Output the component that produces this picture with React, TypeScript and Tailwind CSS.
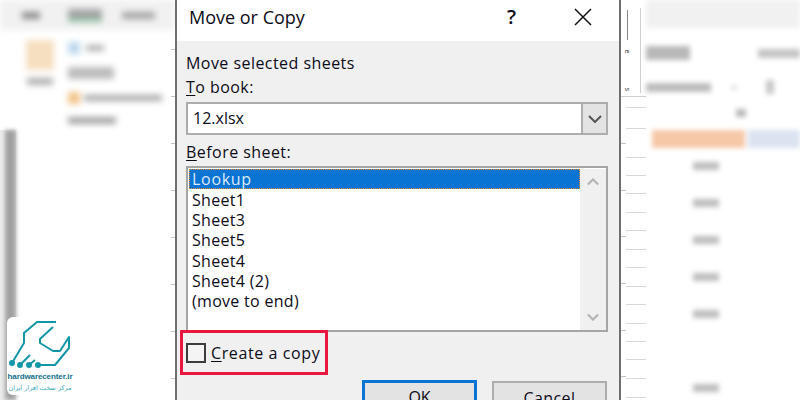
const SHEETS = ['Sheet1', 'Sheet3', 'Sheet5', 'Sheet4', 'Sheet4 (2)', '(move to end)'];
const LEFT_TICKS = [49, 96, 143, 190, 237, 284, 331, 378];
const RIGHT_LINES = [107, 128, 157, 175, 193, 212, 230, 249, 267, 286, 304, 323, 341, 359, 378, 397];
const RIGHT_TICKS = [143, 190, 236, 283, 330, 376];

const segoe = { fontFamily: '"Open Sans", "Noto Sans", sans-serif' };

function Logo() {
  return (
    <div className="absolute left-[7px] top-[317px] flex h-[78px] w-[66px] flex-col items-center overflow-hidden rounded-l-md rounded-tr-sm bg-white">
      <svg viewBox="0 0 66 54" className="h-[54px] w-[66px] shrink-0" fill="none" stroke="#1496a9" strokeWidth="2">
        <path d="M49 5 L30 5 L17 16 L17 26 L5 46" />
        <path d="M46 10 L33 22 L33 26 L46 34 L53 34 L62 20 L62 31 L48 48 L31 48" strokeLinejoin="round" />
        <path d="M13 48 L23 38" />
        <path d="M22 48 L28 43" />
        <circle cx="5" cy="46" r="2" fill="#1496a9" />
        <circle cx="13" cy="48" r="2" fill="#1496a9" />
        <circle cx="22" cy="48" r="2" fill="#1496a9" />
        <circle cx="31" cy="48" r="2" fill="#1496a9" />
      </svg>
      <span className="whitespace-nowrap text-[8px] leading-[12px] font-bold tracking-[-0.1px] text-[#14708a]" style={{ fontFamily: '"Liberation Sans", sans-serif' }}>
        hardwarecenter.ir
      </span>
      <span dir="rtl" className="whitespace-nowrap text-[6.5px] leading-[10px] text-[#37a8b5]" style={{ fontFamily: '"DejaVu Sans", sans-serif' }}>
        مرکز سخت افزار ایران
      </span>
    </div>
  );
}

function LeftBackdrop() {
  return (
    <div className="relative h-full w-[175px] shrink-0 overflow-hidden bg-white">
      <div className="flex h-[30px] items-center bg-[#f1f1f1] pl-[22px] blur-[3px]">
        <div className="h-[7px] w-[18px] bg-[#8c8c8c]" />
        <div className="ml-[28px] h-[13px] w-[34px] border-b-4 border-[#8fc3a4] bg-[#a4a4a4]" />
        <div className="ml-[20px] h-[7px] w-[33px] bg-[#a4a4a4]" />
      </div>
      <div className="flex h-[100px] gap-[14px] pl-[26px] pt-[10px] blur-[3px]">
        <div className="flex flex-col items-center gap-[8px]">
          <div className="h-[30px] w-[28px] bg-[#f6dfc0]" />
          <div className="h-[7px] w-[26px] bg-[#b0b0b0]" />
        </div>
        <div className="flex flex-col gap-[13px] pt-[2px]">
          <div className="flex h-[12px] items-center gap-[6px]">
            <div className="h-[12px] w-[12px] bg-[#bcd8ee]" />
            <div className="h-[6px] w-[18px] bg-[#b0b0b0]" />
          </div>
          <div className="h-[12px] w-[46px] bg-[#bcbcbc]" />
          <div className="flex h-[12px] items-center gap-[4px]">
            <div className="h-[12px] w-[12px] bg-[#f3c48a]" />
            <div className="h-[6px] w-[78px] bg-[#a8a8a8]" />
          </div>
          <div className="h-[7px] w-[48px] bg-[#a4a4a4]" />
        </div>
      </div>
      <div className="flex h-[270px] bg-[#ececec]">
        <div className="w-[5px]" />
        <div className="w-[11px] bg-[#a0a0a0] blur-[2px]" />
        <div className="flex-1 bg-white" />
      </div>
      {LEFT_TICKS.map((y) => (
        <div key={y} className="absolute right-0 h-px w-[4px] bg-[#c4c4c4]" style={{ top: y }} />
      ))}
      <Logo />
    </div>
  );
}

function Dialog() {
  return (
    <div className="flex h-full w-[446px] shrink-0 flex-col overflow-hidden border-x-2 border-[#6e6e6e] bg-[#f0f0f0] text-[#0c0c18]" style={segoe}>
      <div className="flex h-[41px] shrink-0 items-center justify-between bg-white pb-[8px] pl-[12px] pr-[27px]">
        <span className="text-[18px] leading-[34px]">Move or Copy</span>
        <div className="flex items-center gap-[58px]">
          <span className="text-[20px] leading-none font-semibold">?</span>
          <svg viewBox="0 0 18 18" className="h-[18px] w-[18px]" stroke="#111" strokeWidth="1.5">
            <path d="M1 1 L17 17 M17 1 L1 17" />
          </svg>
        </div>
      </div>

      <div className="flex flex-col pl-[9px] pr-[11px]">
        <div className="pt-[10px] text-[16px] leading-[24px] tracking-[0.45px]">Move selected sheets</div>
        <div className="text-[16px] leading-[24px] tracking-[0.45px]">
          <span className="underline underline-offset-2">T</span>o book:
        </div>
        <div className="mt-[3px] flex h-[33px] items-stretch border-2 border-[#adadad] bg-white">
          <span className="flex-1 pl-[5px] text-[16px] leading-[29px]">12.xlsx</span>
          <div className="flex w-[25px] items-center justify-center border-l-2 border-[#adadad] bg-[#e3e3e3]">
            <svg viewBox="0 0 14 8" className="h-[8px] w-[14px]" fill="none" stroke="#555" strokeWidth="2">
              <path d="M1 1 L7 7 L13 1" />
            </svg>
          </div>
        </div>

        <div className="mt-[5px] text-[16px] leading-[24px] tracking-[0.45px]">
          <span className="underline underline-offset-2">B</span>efore sheet:
        </div>
        <div className="mt-[2px] flex h-[166px] border-2 border-[#a5a5a5] bg-white pl-[1px] pt-[1px]">
          <div className="flex-1 text-[16px] leading-[20.2px] tracking-[0.3px]">
            <div className="mb-[1px] h-[20px] border border-dotted border-[#f08a24] bg-[#0a74d4] pl-[2px] leading-[18px] tracking-[0.7px] text-[#dce9f8]">Lookup</div>
            {SHEETS.map((sheet) => (
              <div key={sheet} className="pl-[3px]">{sheet}</div>
            ))}
          </div>
          <div className="flex w-[26px] flex-col items-center justify-between bg-[#f0f0f0] py-[9px]">
            <svg viewBox="0 0 14 8" className="h-[8px] w-[12px]" fill="none" stroke="#b4b4b4" strokeWidth="2.5">
              <path d="M1 7 L7 1 L13 7" />
            </svg>
            <svg viewBox="0 0 14 8" className="h-[8px] w-[12px]" fill="none" stroke="#b4b4b4" strokeWidth="2.5">
              <path d="M1 1 L7 7 L13 1" />
            </svg>
          </div>
        </div>

        <div className="-ml-[6px] -mt-[2px] flex h-[45px] w-[148px] items-center gap-[5px] border-[3px] border-[#e8173f] pl-[3px]">
          <div className="h-[20px] w-[20px] border-2 border-[#3c3c3c] bg-[#f4f4f4]" />
          <span className="text-[16px] leading-[24px] tracking-[0.6px]">
            <span className="underline underline-offset-2">C</span>reate a copy
          </span>
        </div>

        <div className="mt-[5px] flex justify-end gap-[15px] pr-px">
          <div className="flex h-[40px] w-[115px] justify-center border-[3px] border-[#0a74d4] bg-[#e3e3e3] text-[16px] leading-[28px]">OK</div>
          <div className="mt-px flex h-[40px] w-[115px] justify-center border-2 border-[#adadad] bg-[#e3e3e3] text-[16px] leading-[30px] tracking-[0.4px]">Cancel</div>
        </div>
      </div>
    </div>
  );
}

function RightBackdrop() {
  return (
    <div className="flex h-full flex-1 overflow-hidden bg-white">
      <div className="relative h-full w-[25px] shrink-0 bg-white">
        <div className="absolute left-[6px] top-[10px] h-[30px] w-px bg-[#8a8a8a]" />
        <div className="absolute left-[19px] top-[8px] h-[85px] w-px bg-[#d0d0d0]" />
        <span className="absolute left-[5px] top-[48px] rotate-90 text-[7px] leading-none text-[#444]">e</span>
        <span className="absolute left-[5px] top-[86px] rotate-90 text-[7px] leading-none text-[#444]">s</span>
        <div className="absolute left-0 top-[96px] h-px w-[25px] bg-[#cfcfcf]" />
        {RIGHT_LINES.map((y) => (
          <div key={y} className="absolute left-[5px] h-px w-[20px] bg-[#d8d8d8]" style={{ top: y }} />
        ))}
        {RIGHT_TICKS.map((y) => (
          <div key={y} className="absolute left-0 h-px w-[5px] bg-[#c4c4c4]" style={{ top: y }} />
        ))}
      </div>
      <div className="flex flex-1 flex-col blur-[2.5px]">
        <div className="h-[28px] bg-[#f1f1f1]" />
        <div className="flex h-[102px] flex-col pt-[18px]">
          <div className="flex">
            <div className="h-[14px] w-[44px] bg-[#b8b8b8]" />
            <div className="ml-[68px] mt-[3px] h-[9px] w-[42px] bg-[#c4c4c4]" />
          </div>
          <div className="mt-[20px] flex items-center">
            <div className="h-[9px] w-[65px] bg-[#bcbcbc]" />
            <div className="ml-[20px] h-[3px] w-[6px] bg-[#d4d4d4]" />
            <div className="ml-[29px] h-[14px] w-[8px] bg-[#c8c8c8]" />
          </div>
          <div className="ml-[90px] mt-[15px] h-[8px] w-[10px] bg-[#b8b8b8]" />
        </div>
        <div className="flex h-[18px]">
          <div className="ml-[6px] w-[93px] bg-[#f6c8a8]" />
          <div className="ml-[3px] flex-1 bg-[#dbe3f1]" />
        </div>
        <div className="flex w-[105px] flex-col items-center gap-[29px] pt-[14px] pl-[15px]">
          <div className="h-[8px] w-[26px] bg-[#bdbdbd]" />
          <div className="h-[8px] w-[26px] bg-[#bdbdbd]" />
          <div className="h-[8px] w-[26px] bg-[#bdbdbd]" />
          <div className="h-[8px] w-[26px] bg-[#bdbdbd]" />
          <div className="h-[8px] w-[26px] bg-[#bdbdbd]" />
          <div className="h-[8px] w-[26px] bg-transparent" />
          <div className="h-[8px] w-[26px] bg-[#bdbdbd]" />
        </div>
      </div>
    </div>
  );
}

export default function App() {
  return (
    <div className="flex h-[400px] w-[800px] overflow-hidden bg-white">
      <LeftBackdrop />
      <Dialog />
      <RightBackdrop />
    </div>
  );
}
